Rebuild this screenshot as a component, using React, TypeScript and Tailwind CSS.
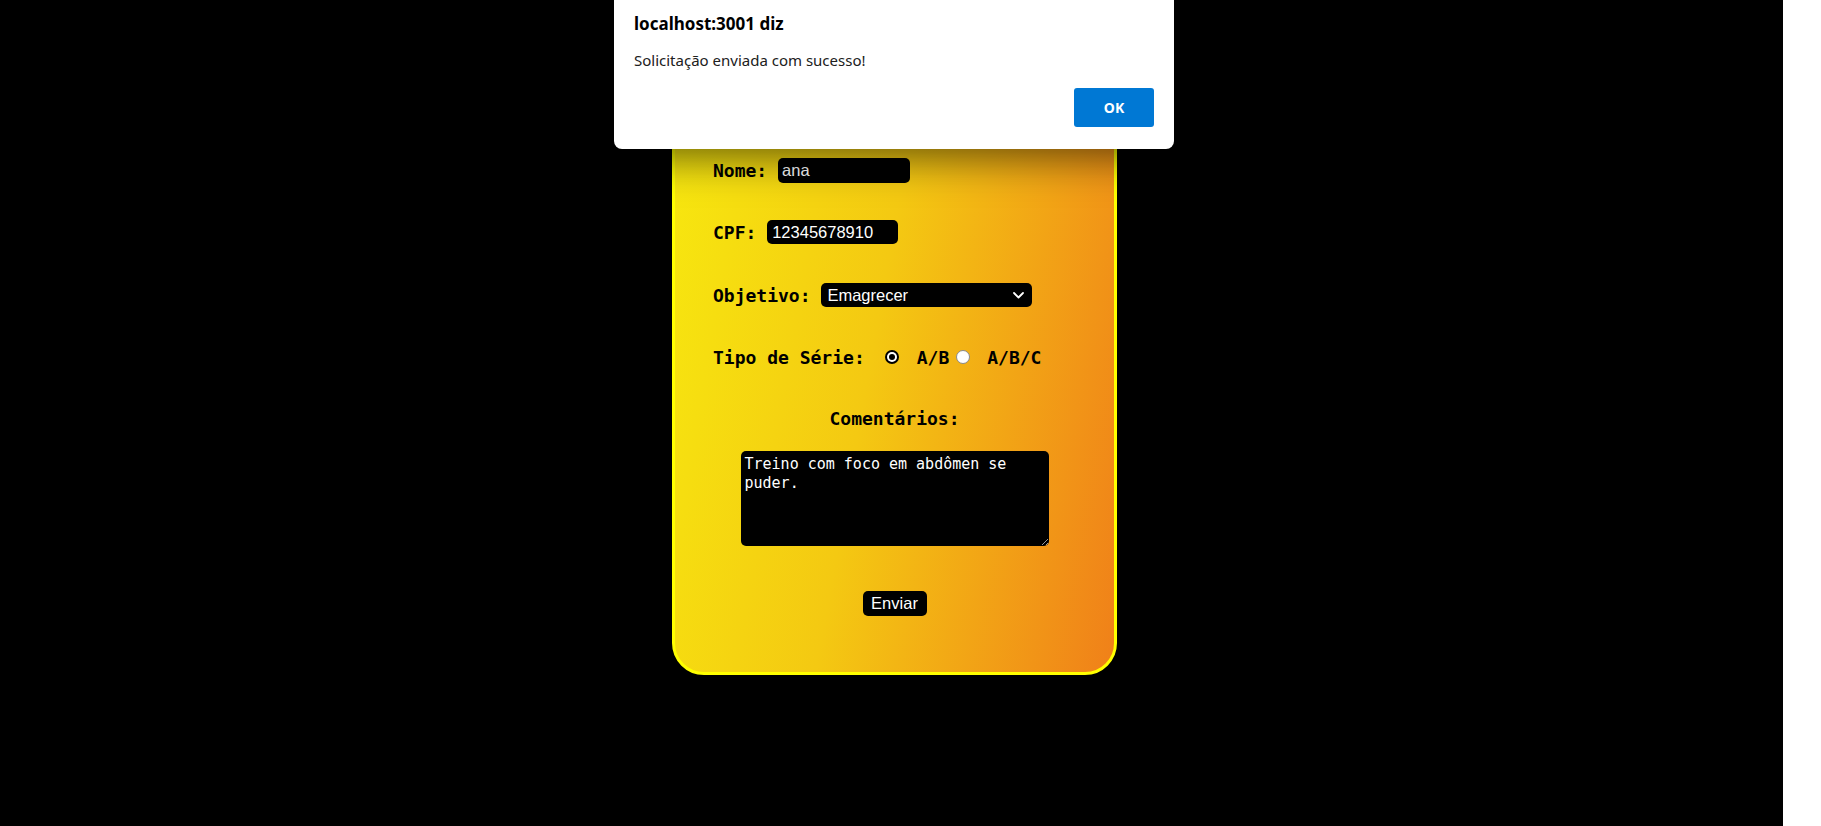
import React from "react";

const mono = { fontFamily: '"DejaVu Sans Mono", "Liberation Mono", monospace' } as const;
const arial = { fontFamily: '"Liberation Sans", Arial, sans-serif' } as const;
const ui = { fontFamily: '"Noto Sans", "Open Sans", sans-serif' } as const;

function Radio({ checked }: { checked?: boolean }) {
  if (checked) {
    return (
      <span className="block w-[14px] h-[14px] rounded-full bg-black flex items-center justify-center shrink-0">
        <span className="block w-[10px] h-[10px] rounded-full bg-white flex items-center justify-center">
          <span className="block w-[6px] h-[6px] rounded-full bg-black" />
        </span>
      </span>
    );
  }
  return <span className="block w-[14px] h-[14px] rounded-full bg-white border border-[#8a8a8a] shrink-0" />;
}

export default function App() {
  return (
    <div className="relative w-[1821px] h-[826px] flex bg-black overflow-hidden">
      <div className="flex-1 h-full bg-black pl-[672px] pt-[80px]">
        <div className="w-[445px] rounded-[32px] border-[3px] border-[#ffff00] bg-[linear-gradient(100deg,#f7e80f_0%,#f4c912_45%,#f08019_100%)] pl-[38px] pr-[38px] pt-[75px] pb-[56px] text-black" style={mono}>
          <div className="h-[25px] flex items-center">
            <span className="text-[18px] font-bold whitespace-pre">Nome: </span>
            <div className="w-[132px] h-[25px] bg-black rounded-[5px] text-white text-[16.5px] flex items-center pl-[4px]" style={arial}>ana</div>
          </div>
          <div className="h-[24px] mt-[37px] flex items-center">
            <span className="text-[18px] font-bold whitespace-pre">CPF: </span>
            <div className="w-[131px] h-[24px] bg-black rounded-[5px] text-white text-[16.5px] flex items-center pl-[5px]" style={arial}>12345678910</div>
          </div>
          <div className="h-[24px] mt-[39px] flex items-center">
            <span className="text-[18px] font-bold whitespace-pre">Objetivo: </span>
            <div className="w-[211px] h-[24px] bg-black rounded-[5px] text-white text-[16.5px] flex items-center justify-between pl-[6px] pr-[8px]" style={arial}>
              <span>Emagrecer</span>
              <svg width="11" height="7" viewBox="0 0 11 7" fill="none">
                <path d="M1 1l4.5 4.5L10 1" stroke="white" strokeWidth="1.8" strokeLinecap="round" strokeLinejoin="round" />
              </svg>
            </div>
          </div>
          <div className="h-[24px] mt-[38px] flex items-center">
            <span className="text-[18px] font-bold whitespace-pre">Tipo de Série:</span>
            <span className="ml-[20px] flex"><Radio checked /></span>
            <span className="ml-[18px] text-[18px] font-bold">A/B</span>
            <span className="ml-[7px] flex"><Radio /></span>
            <span className="ml-[17px] text-[18px] font-bold">A/B/C</span>
          </div>
          <div className="h-[24px] mt-[37px] flex items-center justify-center text-[18px] font-bold">
            Comentários:
          </div>
          <div className="mt-[21px] flex justify-center">
            <textarea
              className="block w-[308px] h-[95px] bg-black text-white rounded-[5px] text-[15px] leading-[19px] p-[4px] outline-none"
              style={mono}
              defaultValue="Treino com foco em abdômen se puder."
            />
          </div>
          <div className="mt-[45px] flex justify-center">
            <button className="w-[64px] h-[25px] bg-black text-white rounded-[5px] text-[16.5px] flex items-center justify-center" style={arial}>
              Enviar
            </button>
          </div>
        </div>
      </div>
      <div className="w-[38px] h-full bg-white" />

      <div className="absolute left-[614px] top-0 w-[560px] h-[149px] bg-white rounded-b-[8px] shadow-[0_10px_40px_rgba(0,0,0,0.55)] pl-[20px] pr-[20px] text-black" style={ui}>
        <div className="pt-[12px] h-[36px] text-[17px] font-bold leading-[24px]">localhost:3001 diz</div>
        <div className="mt-[13px] text-[15px] leading-[22px] text-[#202020]">Solicitação enviada com sucesso!</div>
        <div className="flex justify-end mt-[17px]">
          <button className="w-[80px] h-[39px] bg-[#0078d4] text-white text-[14px] font-bold rounded-[3px]" style={ui}>
            OK
          </button>
        </div>
      </div>
    </div>
  );
}
